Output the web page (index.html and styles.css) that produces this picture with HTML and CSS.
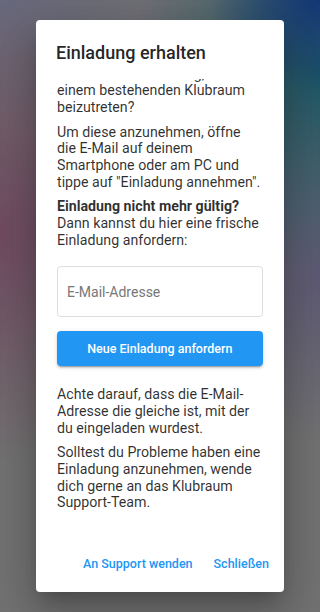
FILE: index.html
```html
<!DOCTYPE html>
<html lang="de">
<head>
<meta charset="utf-8">
<meta name="viewport" content="width=device-width, initial-scale=1">
<title>Einladung erhalten</title>
<link rel="stylesheet" href="styles.css">
</head>
<body>
<div class="backdrop">
  <div class="dialog" role="dialog" aria-labelledby="dlg-title">
    <h2 class="dialog-title" id="dlg-title">Einladung erhalten</h2>
    <div class="dialog-body">
      <div class="dialog-content">
        <p>Du hast eine E-Mail von Klubraum erhalten.</p>
        <p>Hast du eine Einladung, um einem bestehenden Klubraum beizutreten?</p>
        <p>Um diese anzunehmen, öffne die E-Mail auf deinem Smartphone oder am PC und tippe auf "Einladung annehmen".</p>
        <p><strong>Einladung nicht mehr gültig?</strong> Dann kannst du hier eine frische Einladung anfordern:</p>
        <input class="email-field" type="email" placeholder="E-Mail-Adresse">
        <button class="primary-btn" type="button">Neue Einladung anfordern</button>
        <p class="note">Achte darauf, dass die E-Mail-Adresse die gleiche ist, mit der du eingeladen wurdest.</p>
        <p>Solltest du Probleme haben eine Einladung anzunehmen, wende dich gerne an das Klubraum Support-Team.</p>
      </div>
    </div>
    <div class="dialog-actions">
      <button class="text-btn" type="button">An Support wenden</button>
      <button class="text-btn" type="button">Schließen</button>
    </div>
  </div>
</div>
</body>
</html>
```
FILE: styles.css
```css
html, body {
  margin: 0;
  padding: 0;
}

body {
  font-family: Roboto, "Liberation Sans", sans-serif;
  -webkit-font-smoothing: antialiased;
}

.backdrop {
  width: 320px;
  height: 612px;
  overflow: hidden;
  display: flex;
  background:
    radial-gradient(ellipse 110px 90px at 100% 0%, rgba(16, 52, 118, 0.95), rgba(16, 52, 118, 0) 100%),
    radial-gradient(ellipse 190px 200px at 100% 12%, rgba(28, 86, 102, 1), rgba(28, 86, 102, 0) 100%),
    radial-gradient(ellipse 150px 170px at 100% 45%, rgba(94, 90, 116, 1), rgba(94, 90, 116, 0) 100%),
    radial-gradient(ellipse 170px 230px at 0% 38%, rgba(112, 74, 96, 1), rgba(112, 74, 96, 0) 100%),
    radial-gradient(ellipse 200px 140px at 0% 0%, rgba(104, 104, 124, 1), rgba(104, 104, 124, 0) 100%),
    #727272;
}

.dialog {
  margin: 20px 36px;
  width: 248px;
  height: 572px;
  background: #ffffff;
  border-radius: 4px;
  display: flex;
  flex-direction: column;
  overflow: hidden;
  box-shadow:
    0 11px 15px -7px rgba(0, 0, 0, 0.2),
    0 24px 38px 3px rgba(0, 0, 0, 0.14),
    0 9px 46px 8px rgba(0, 0, 0, 0.12);
}

.dialog-title {
  margin: 0;
  padding: 20px 20px 14px;
  font-size: 18px;
  line-height: 25px;
  font-weight: 500;
  color: rgba(0, 0, 0, 0.87);
  flex-shrink: 0;
}

.dialog-body {
  flex: 1 1 auto;
  min-height: 0;
  overflow-y: auto;
  display: flex;
  flex-direction: column-reverse;
  scrollbar-width: none;
}

.dialog-body::-webkit-scrollbar {
  display: none;
}

.dialog-content {
  flex-shrink: 0;
  display: flex;
  flex-direction: column;
  padding: 0 21.5px 20px 21px;
  font-size: 14.2px;
  line-height: 16.66px;
  color: rgba(0, 0, 0, 0.82);
}

.dialog-content p {
  margin: 0;
}

.dialog-content p + p {
  margin-top: 8px;
}

.dialog-content strong {
  font-weight: 700;
}

.email-field {
  box-sizing: border-box;
  width: 100%;
  height: 51.6px;
  margin: 17.4px 0 0;
  padding: 0 9px;
  border: 1px solid #dedede;
  border-radius: 4px;
  background: #ffffff;
  font-family: inherit;
  font-size: 14px;
  color: rgba(0, 0, 0, 0.87);
  outline: none;
}

.email-field::placeholder {
  color: #777777;
  opacity: 1;
}

.primary-btn {
  box-sizing: border-box;
  width: 100%;
  height: 35px;
  margin-top: 13.7px;
  padding: 0 16px;
  border: 0;
  border-radius: 4px;
  background: #2196f3;
  color: #ffffff;
  font-family: inherit;
  font-size: 12.5px;
  font-weight: 500;
  box-shadow:
    0 3px 1px -2px rgba(0, 0, 0, 0.2),
    0 2px 2px 0 rgba(0, 0, 0, 0.14),
    0 1px 5px 0 rgba(0, 0, 0, 0.12);
}

.dialog-content .note {
  margin-top: 20.4px;
}

.dialog-actions {
  flex-shrink: 0;
  display: flex;
  justify-content: flex-end;
  align-items: center;
  gap: 5px;
  padding: 14px 7px 11px;
}

.text-btn {
  height: 36px;
  padding: 0 8px;
  border: 0;
  border-radius: 4px;
  background: transparent;
  color: #2196f3;
  font-family: inherit;
  font-size: 12.5px;
  font-weight: 500;
}
```
